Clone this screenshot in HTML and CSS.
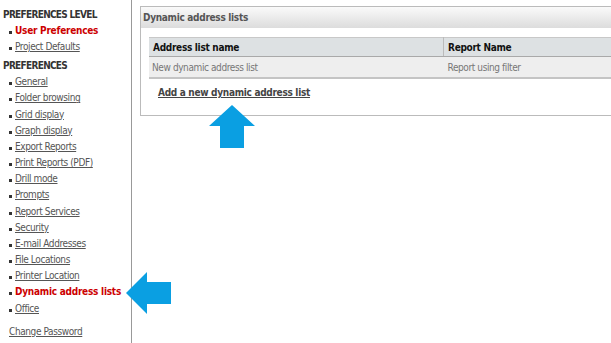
FILE: index.html
```html
<!DOCTYPE html>
<html lang="en">
  <head>
    <meta charset="utf-8" />
    <title>Preferences</title>
    <link rel="stylesheet" href="styles.css">
  </head>
  <body>
    <div class="page">
      <div class="sidebar">
        <h3 class="side-title">PREFERENCES LEVEL</h3>
        <ul class="side-list">
          <li class="active">User Preferences</li>
          <li><a href="#">Project Defaults</a></li>
        </ul>
        <h3 class="side-title">PREFERENCES</h3>
        <ul class="side-list">
          <li><a href="#">General</a></li>
          <li><a href="#">Folder browsing</a></li>
          <li><a href="#">Grid display</a></li>
          <li><a href="#">Graph display</a></li>
          <li><a href="#">Export Reports</a></li>
          <li><a href="#">Print Reports (PDF)</a></li>
          <li><a href="#">Drill mode</a></li>
          <li><a href="#">Prompts</a></li>
          <li><a href="#">Report Services</a></li>
          <li><a href="#">Security</a></li>
          <li><a href="#">E-mail Addresses</a></li>
          <li><a href="#">File Locations</a></li>
          <li><a href="#">Printer Location</a></li>
          <li class="active">Dynamic address lists</li>
          <li><a href="#">Office</a></li>
        </ul>
        <a class="change-pw" href="#">Change Password</a>
      </div>
      <div class="content">
        <div class="panel">
          <div class="panel-header">Dynamic address lists</div>
          <table class="list-table">
            <tr class="head-row">
              <td class="col-name">Address list name</td>
              <td>Report Name</td>
            </tr>
            <tr class="data-row">
              <td>New dynamic address list</td>
              <td>Report using filter</td>
            </tr>
          </table>
          <a class="add-link" href="#">Add a new dynamic address list</a>
        </div>
      </div>
    </div>

    <svg class="arrow arrow-up" width="46" height="43" viewBox="0 0 46 43">
      <polygon points="23,0 46,21 35,21 35,43 11,43 11,21 0,21" fill="#0a9fe2" />
    </svg>
    <svg class="arrow arrow-left" width="45" height="42" viewBox="0 0 45 42">
      <polygon points="0,21 21,0 21,10 45,10 45,32 21,32 21,42" fill="#0a9fe2" />
    </svg>
  </body>
</html>
```

FILE: styles.css
```css
body {
  margin: 0;
  background-color: white;
  font-family: "DejaVu Sans Condensed", "DejaVu Sans", sans-serif;
  font-size: 10px;
  letter-spacing: -0.4px;
  color: #555;
  overflow: hidden;
}
a {
  color: #555;
}
.page {
  display: flex;
  min-height: 343px;
}
.sidebar {
  width: 131px;
  flex-shrink: 0;
  border-right: 1px solid #999;
  padding-top: 7px;
}
.side-title {
  margin: 0 0 0 3px;
  font-size: 10px;
  font-weight: bold;
  letter-spacing: -0.7px;
  color: #333;
  line-height: 16px;
}
.side-list {
  list-style: none;
  margin: 0 0 3px 0;
  padding: 0;
}
.side-list li {
  line-height: 16.15px;
  padding-left: 15px;
  position: relative;
}
.side-list li::before {
  content: "";
  position: absolute;
  left: 9px;
  top: 8px;
  width: 3px;
  height: 3px;
  background: #333;
}
.side-list li.active {
  color: #cc0000;
  font-weight: bold;
  letter-spacing: -0.25px;
}
.change-pw {
  display: block;
  margin: 9px 0 0 9px;
}
.content {
  flex: 1;
  padding: 6px 0 0 8px;
}
.panel {
  border: 1px solid #bbb;
  border-right: none;
  height: 108px;
}
.panel-header {
  height: 21px;
  line-height: 21px;
  padding-left: 2px;
  font-weight: bold;
  letter-spacing: -0.3px;
  color: #555;
  background: linear-gradient(#fafafa, #dcdcdc);
}
.list-table {
  margin: 9px 0 0 8px;
  width: calc(100% - 8px);
  border-collapse: collapse;
}
.list-table td {
  padding: 0 4px;
  text-align: left;
}
.head-row td {
  height: 18px;
  background: #dde1e3;
  border-top: 1px solid #c8c8c8;
  border-bottom: 1px solid #a9a9a9;
  font-weight: bold;
  letter-spacing: -0.3px;
  color: #111;
}
.head-row .col-name {
  border-right: 1px solid #bbb;
  width: 286px;
}
.data-row td {
  height: 20px;
  background: #eee;
  border-bottom: 2px solid #c4c4c4;
  color: #777;
}
.data-row td:first-child {
  padding-left: 3px;
}
.add-link {
  display: inline-block;
  margin: 8px 0 0 17px;
  font-weight: bold;
  letter-spacing: -0.3px;
  color: #444;
}
.arrow {
  position: absolute;
}
.arrow-up {
  left: 209px;
  top: 105px;
}
.arrow-left {
  left: 126px;
  top: 272px;
}
```
